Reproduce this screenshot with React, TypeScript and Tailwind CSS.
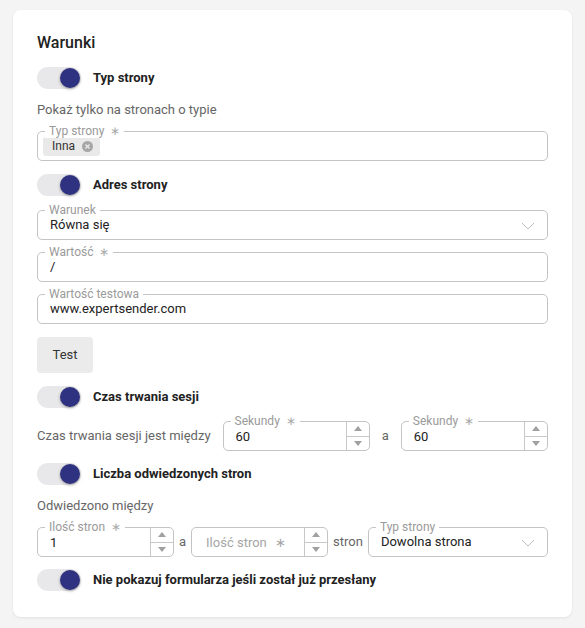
import React from 'react';

const Toggle: React.FC<{ label: string }> = ({ label }) => (
  <div className="flex items-center h-[22px]">
    <div className="relative w-[44px] h-[22px] rounded-full bg-[#e8e8ea]">
      <div className="absolute right-[1px] top-[1px] w-[20px] h-[20px] rounded-full bg-[#2f3281] shadow-[0_1px_3px_rgba(0,0,0,0.35)]"></div>
    </div>
    <span className="ml-[12px] text-[13px] font-bold text-[#222]">{label}</span>
  </div>
);

const FieldLabel: React.FC<{ text: string; required?: boolean }> = ({ text, required }) => (
  <span className="absolute -top-[8px] left-[7px] px-[4px] bg-white text-[12px] leading-[14px] text-[#9a9a9a] whitespace-nowrap">
    {text}
    {required && <span className="ml-[6px] text-[#aaa]">∗</span>}
  </span>
);

const Chevron = () => (
  <svg width="14" height="8" viewBox="0 0 14 8" className="absolute right-[12px] top-[11px]">
    <path d="M1 1 L7 7 L13 1" fill="none" stroke="#bdbdbd" strokeWidth="1" />
  </svg>
);

const Spinner = () => (
  <div className="flex flex-col w-[23px] h-full border-l border-[#c8c8c8]">
    <div className="flex-1 flex items-center justify-center border-b border-[#c8c8c8]">
      <svg width="8" height="5" viewBox="0 0 8 5"><path d="M4 0 L8 5 L0 5 Z" fill="#a0a0a0" /></svg>
    </div>
    <div className="flex-1 flex items-center justify-center">
      <svg width="8" height="5" viewBox="0 0 8 5"><path d="M0 0 L8 0 L4 5 Z" fill="#a0a0a0" /></svg>
    </div>
  </div>
);

const TextField: React.FC<{ label: string; value: string; required?: boolean; select?: boolean }> = ({ label, value, required, select }) => (
  <div className="relative h-[30px] border border-[#c4c4c4] rounded-[5px] flex items-center pl-[12px]">
    <FieldLabel text={label} required={required} />
    <span className="text-[13px] text-[#222]">{value}</span>
    {select && <Chevron />}
  </div>
);

const NumberField: React.FC<{ label?: string; value?: string; placeholder?: string; className?: string }> = ({ label, value, placeholder, className }) => (
  <div className={`relative h-[30px] border border-[#c4c4c4] rounded-[5px] flex items-center ${className ?? ''}`}>
    {label && <FieldLabel text={label} required />}
    <div className="flex-1 pl-[12px]">
      {value ? (
        <span className="text-[13px] text-[#222]">{value}</span>
      ) : (
        <span className="text-[13px] text-[#a5a5a5] pl-[2px]">{placeholder}<span className="ml-[8px]">∗</span></span>
      )}
    </div>
    <Spinner />
  </div>
);

export default function App() {
  return (
    <div className="min-h-[628px] bg-[#f4f4f4] pt-[10px] px-[13px] font-['Roboto',sans-serif]">
      <div className="bg-white rounded-[8px] shadow-[0_1px_3px_rgba(0,0,0,0.08)] px-[24px] pt-[21px] pb-[26px] flex flex-col">
        <h2 className="text-[16px] leading-[24px] font-medium text-[#222]">Warunki</h2>

        <div className="mt-[12px]"><Toggle label="Typ strony" /></div>
        <p className="mt-[11px] text-[13px] leading-[20px] text-[#666]">Pokaż tylko na stronach o typie</p>
        <div className="mt-[11px] relative h-[30px] border border-[#c4c4c4] rounded-[5px] flex items-center pl-[5px]">
          <FieldLabel text="Typ strony" required />
          <span className="flex items-center gap-[7px] h-[19px] bg-[#e9e9e9] rounded-[3px] pl-[9px] pr-[7px] text-[12px] text-[#333]">
            Inna
            <svg width="11" height="11" viewBox="0 0 12 12">
              <circle cx="6" cy="6" r="6" fill="#a6a6a6" />
              <path d="M3.8 3.8 L8.2 8.2 M8.2 3.8 L3.8 8.2" stroke="#e9e9e9" strokeWidth="1.5" />
            </svg>
          </span>
        </div>

        <div className="mt-[13px]"><Toggle label="Adres strony" /></div>
        <div className="mt-[14px]"><TextField label="Warunek" value="Równa się" select /></div>
        <div className="mt-[12px]"><TextField label="Wartość" value="/" required /></div>
        <div className="mt-[12px]"><TextField label="Wartość testowa" value="www.expertsender.com" /></div>
        <div className="mt-[13px]">
          <button className="w-[56px] h-[36px] rounded-[4px] bg-[#ebebeb] text-[13px] text-[#333]">Test</button>
        </div>

        <div className="mt-[13px]"><Toggle label="Czas trwania sesji" /></div>
        <div className="mt-[13px] flex items-center">
          <span className="text-[13px] text-[#666] whitespace-nowrap">Czas trwania sesji jest między</span>
          <NumberField label="Sekundy" value="60" className="ml-[12px] flex-1" />
          <span className="mx-[12px] text-[13px] text-[#666]">a</span>
          <NumberField label="Sekundy" value="60" className="flex-1" />
        </div>

        <div className="mt-[12px]"><Toggle label="Liczba odwiedzonych stron" /></div>
        <p className="mt-[11px] text-[13px] leading-[20px] text-[#666]">Odwiedzono między</p>
        <div className="mt-[11px] flex items-center gap-[5px]">
          <NumberField label="Ilość stron" value="1" className="w-[137px]" />
          <span className="text-[13px] text-[#666]">a</span>
          <NumberField placeholder="Ilość stron" className="w-[137px]" />
          <span className="text-[13px] text-[#666]">stron</span>
          <div className="flex-1"><TextField label="Typ strony" value="Dowolna strona" select /></div>
        </div>

        <div className="mt-[12px]"><Toggle label="Nie pokazuj formularza jeśli został już przesłany" /></div>
      </div>
    </div>
  );
}
